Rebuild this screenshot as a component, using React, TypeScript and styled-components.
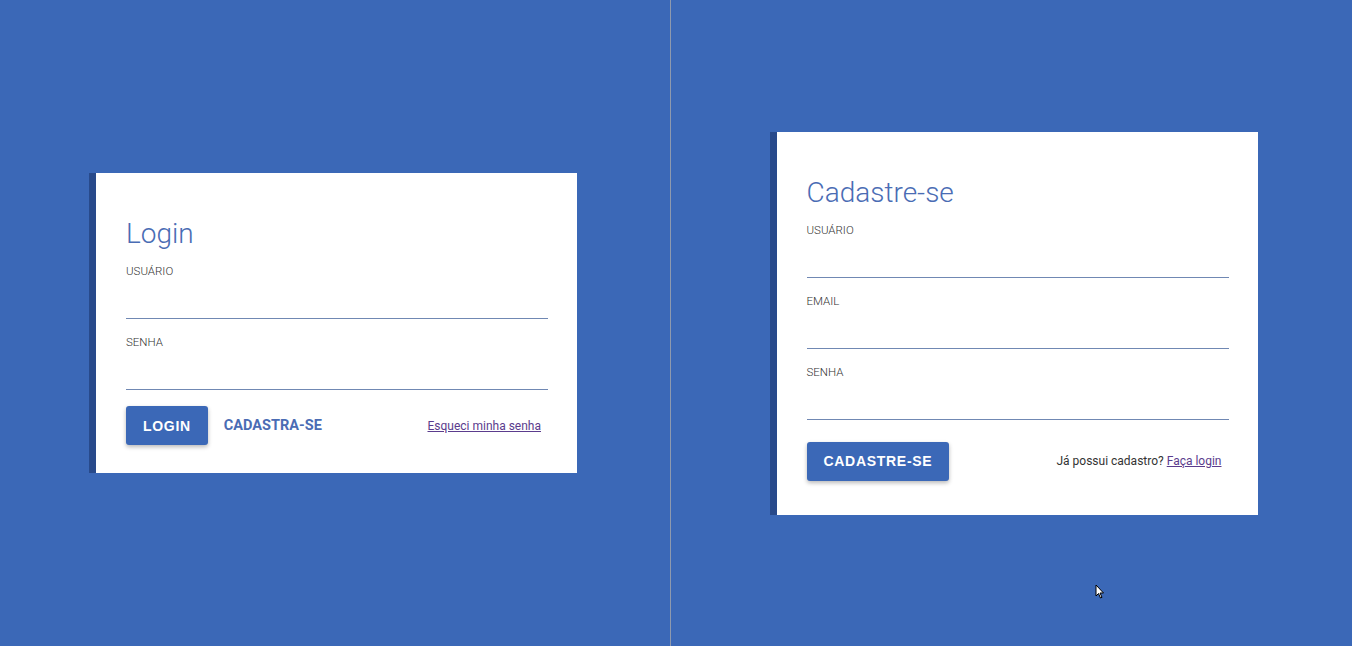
import React from "react";
import styled, { createGlobalStyle } from "styled-components";

const Global = createGlobalStyle`
  html, body { margin: 0; padding: 0; }
  body { background: #3b68b7; font-family: Roboto, "Liberation Sans", sans-serif; }
`;

const Page = styled.div`
  display: flex;
  height: 646px;
  width: 1352px;
  background: #3b68b7;
  position: relative;
  overflow: hidden;
`;

const Half = styled.section<{ $w?: number; $divider?: boolean; $shift?: number }>`
  ${(p) => (p.$w ? `width: ${p.$w}px; flex: none;` : "flex: 1;")}
  box-sizing: border-box;
  display: flex;
  align-items: center;
  justify-content: center;
  ${(p) => (p.$divider ? "border-right: 1px solid #8e99ae;" : "")}
  padding-right: ${(p) => (p.$shift && p.$shift > 0 ? p.$shift : 0)}px;
  padding-left: ${(p) => (p.$shift && p.$shift < 0 ? -p.$shift : 0)}px;
`;

const Card = styled.div<{ $pb: number }>`
  width: 422px;
  box-sizing: content-box;
  background: #ffffff;
  border-left: 7px solid #284a8b;
  padding: 43px 29px ${(p) => p.$pb}px 30px;
  display: flex;
  flex-direction: column;
`;

const Title = styled.h1`
  margin: 0;
  font-family: Roboto, sans-serif;
  font-weight: 300;
  font-size: 28px;
  line-height: 36px;
  color: #4a6cb4;
`;

const Field = styled.div<{ $first?: boolean }>`
  display: flex;
  flex-direction: column;
  margin-top: ${(p) => (p.$first ? 12 : 16)}px;
`;

const Label = styled.label`
  font-family: Roboto, sans-serif;
  font-weight: 300;
  font-size: 11.5px;
  line-height: 14px;
  color: #333333;
`;

const Input = styled.input`
  box-sizing: border-box;
  height: 41px;
  border: none;
  border-bottom: 1px solid #7088b3;
  outline: none;
  background: transparent;
  padding: 0;
  font-family: Roboto, sans-serif;
  font-size: 14px;
`;

const Footer = styled.div<{ $mt: number }>`
  display: flex;
  align-items: center;
  margin-top: ${(p) => p.$mt}px;
`;

const PrimaryButton = styled.button`
  height: 39px;
  padding: 0 17px;
  border: none;
  border-radius: 3px;
  background: #3b68b7;
  color: #ffffff;
  font-family: "Liberation Sans", Arial, sans-serif;
  font-weight: 700;
  font-size: 14px;
  letter-spacing: 0.7px;
  box-shadow: 0 2px 4px rgba(0, 0, 0, 0.28);
  cursor: pointer;
`;

const TextButton = styled.button`
  margin-left: 16px;
  padding: 0;
  border: none;
  background: transparent;
  color: #4a6cb4;
  font-family: Roboto, sans-serif;
  font-weight: 700;
  font-size: 14.5px;
  cursor: pointer;
`;

const Aside = styled.p`
  margin: 0 7px 0 auto;
  font-family: Roboto, sans-serif;
  font-size: 12px;
  color: #333333;
`;

const Link = styled.a`
  color: #5b3c8d;
  text-decoration: underline;
  font-family: Roboto, sans-serif;
  font-size: 12px;
`;

const Pointer = styled.svg`
  position: absolute;
  left: 1095px;
  top: 584px;
`;

export default function App() {
  return (
    <>
      <Global />
      <Page>
        <Half $w={671} $divider $shift={4}>
          <Card $pb={28}>
            <Title>Login</Title>
            <Field $first>
              <Label>USUÁRIO</Label>
              <Input type="text" />
            </Field>
            <Field>
              <Label>SENHA</Label>
              <Input type="password" />
            </Field>
            <Footer $mt={16}>
              <PrimaryButton>LOGIN</PrimaryButton>
              <TextButton>CADASTRA-SE</TextButton>
              <Aside>
                <Link href="#">Esqueci minha senha</Link>
              </Aside>
            </Footer>
          </Card>
        </Half>
        <Half $shift={-4}>
          <Card $pb={34}>
            <Title>Cadastre-se</Title>
            <Field $first>
              <Label>USUÁRIO</Label>
              <Input type="text" />
            </Field>
            <Field>
              <Label>EMAIL</Label>
              <Input type="email" />
            </Field>
            <Field>
              <Label>SENHA</Label>
              <Input type="password" />
            </Field>
            <Footer $mt={22}>
              <PrimaryButton>CADASTRE-SE</PrimaryButton>
              <Aside>
                Já possui cadastro? <Link href="#">Faça login</Link>
              </Aside>
            </Footer>
          </Card>
        </Half>
        <Pointer width="10" height="16" viewBox="0 0 10 16">
          <path d="M1 1 L1 12 L3.5 9.5 L5.5 14 L7 13.3 L5 9 L8.5 9 Z" fill="#ffffff" stroke="#000000" strokeWidth="1" />
        </Pointer>
      </Page>
    </>
  );
}
